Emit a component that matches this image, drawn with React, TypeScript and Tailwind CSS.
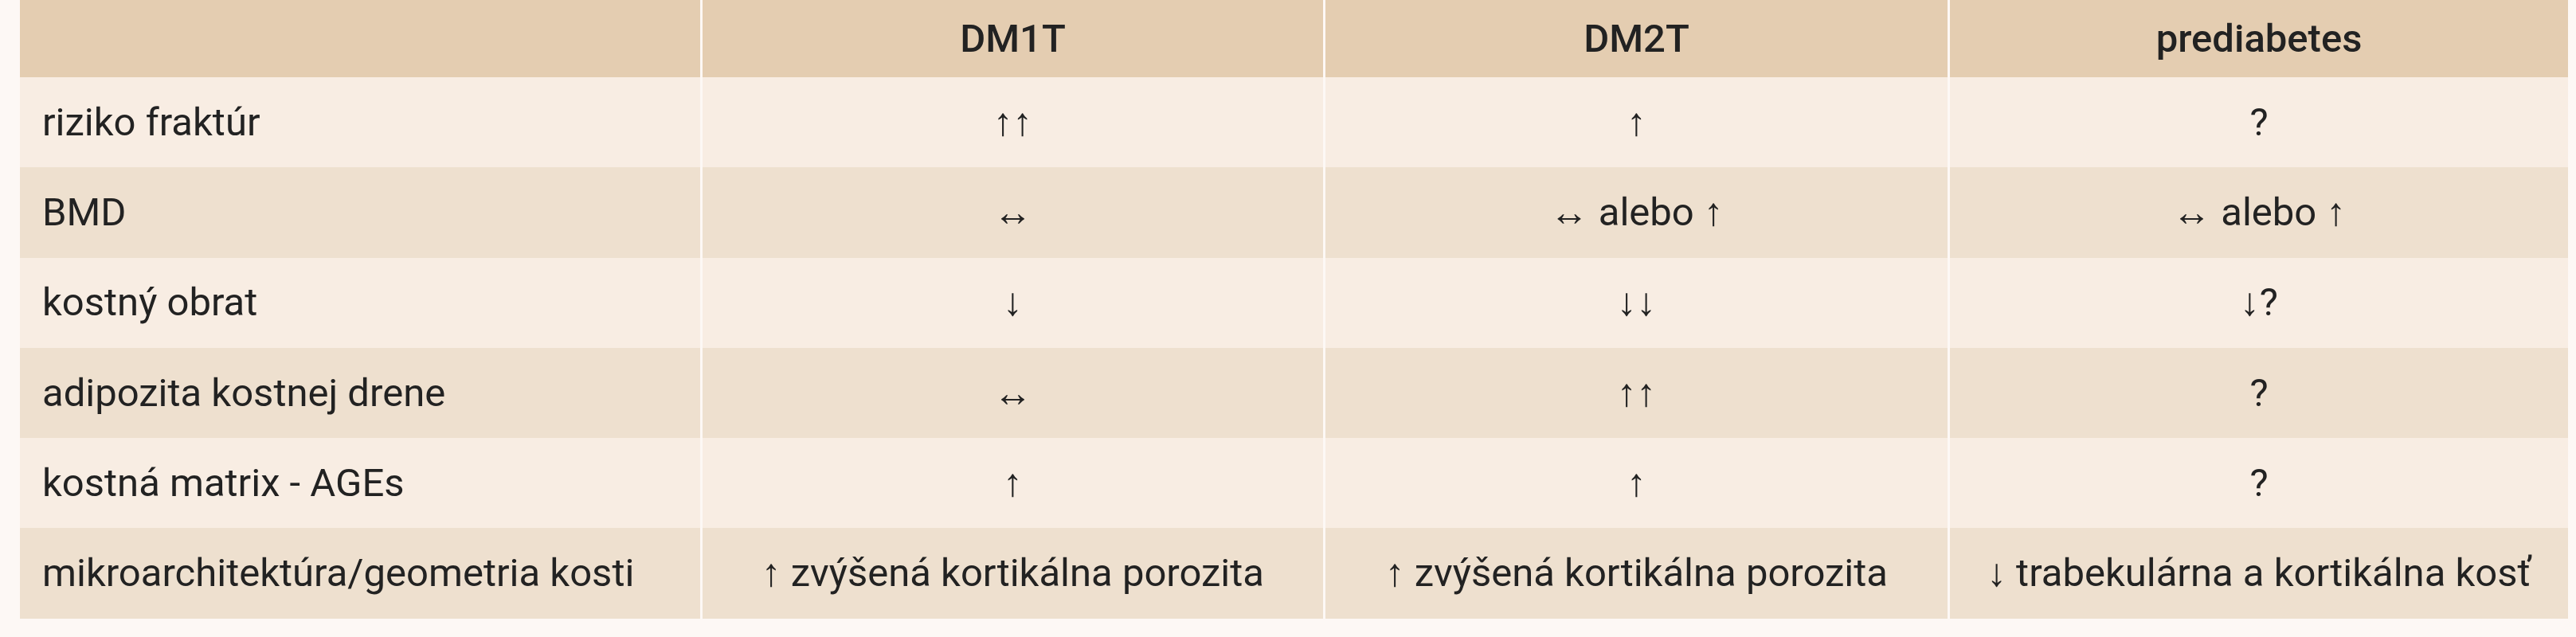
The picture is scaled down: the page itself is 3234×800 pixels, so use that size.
const headers = ["", "DM1T", "DM2T", "prediabetes"]

const rows: string[][] = [
  ["riziko fraktúr", "↑↑", "↑", "?"],
  ["BMD", "↔", "↔ alebo ↑", "↔ alebo ↑"],
  ["kostný obrat", "↓", "↓↓", "↓?"],
  ["adipozita kostnej drene", "↔", "↑↑", "?"],
  ["kostná matrix - AGEs", "↑", "↑", "?"],
  ["mikroarchitektúra/geometria kosti", "↑ zvýšená kortikálna porozita", "↑ zvýšená kortikálna porozita", "↓ trabekulárna a kortikálna kosť"],
]

export default function App() {
  return (
    <div
      className="min-h-[800px] w-full bg-[#fdf8f5] pl-[25px] pr-[10px] text-[49px] text-[#222222]"
      style={{ fontFamily: "Roboto, 'Liberation Sans', sans-serif" }}
    >
      <div className="grid grid-cols-[854px_782px_784px_779px]">
        {/* Header */}
        {headers.map((h, i) => (
          <div
            key={"h" + i}
            className={`flex h-[97px] items-center justify-center bg-[#e4cdb1] font-medium ${i > 0 ? "border-l-[3px] border-[#fdf8f5]" : ""}`}
          >
            {h}
          </div>
        ))}

        {/* Body */}
        {rows.map((row, r) =>
          row.map((cell, c) => (
            <div
              key={r + "-" + c}
              className={`flex h-[113.3px] items-center ${r % 2 === 0 ? "bg-[#f8ede3]" : "bg-[#eee0cf]"} ${
                c === 0 ? "justify-start pl-[28px]" : "justify-center border-l-[3px] border-[#fdf8f5]"
              }`}
            >
              {cell}
            </div>
          )),
        )}
      </div>
    </div>
  )
}
